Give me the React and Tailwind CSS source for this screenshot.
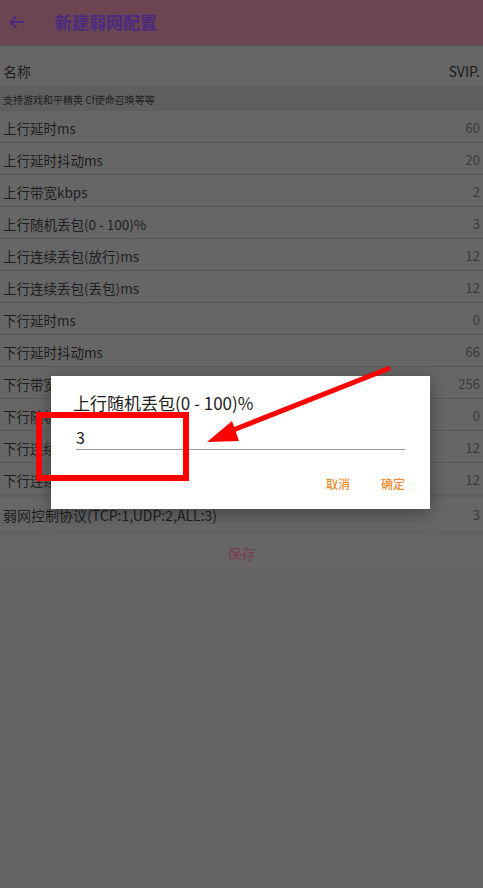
import React from "react";

const rows = [
  ["上行延时ms", "60"],
  ["上行延时抖动ms", "20"],
  ["上行带宽kbps", "2"],
  ["上行随机丢包(0 - 100)%", "3"],
  ["上行连续丢包(放行)ms", "12"],
  ["上行连续丢包(丢包)ms", "12"],
  ["下行延时ms", "0"],
  ["下行延时抖动ms", "66"],
  ["下行带宽kbps", "256"],
  ["下行随机丢包(0 - 100)%", "0"],
  ["下行连续丢包(放行)ms", "12"],
  ["下行连续丢包(丢包)ms", "12"],
];

const font = { fontFamily: '"Noto Sans CJK SC", Roboto, sans-serif' };

export default function App() {
  return (
    <div className="relative w-[483px] h-[888px] overflow-hidden bg-[#636363]" style={font}>
      <div className="flex h-[46px] items-center bg-[#6b4551] border-b-2 border-[#5e4a50]">
        <svg width="16" height="14" viewBox="0 0 16 14" className="ml-[9px]">
          <path d="M15 7H2M7 1.5L1.5 7L7 12.5" stroke="#4b2a80" strokeWidth="2" fill="none" />
        </svg>
        <span className="ml-[30px] text-[17px] font-bold leading-[22px] text-[#4b2a80]">新建弱网配置</span>
      </div>
      <div className="flex h-[40px] items-center justify-between bg-[#666666] px-[3px] pt-[10px]">
        <span className="text-[14px] leading-[20px] text-[#1e1e1e]">名称</span>
        <span className="text-[14px] leading-[20px] text-[#1a1a1a]">SVIP.</span>
      </div>
      <div className="flex h-[25px] items-center bg-[#5f5f5f] px-[3px] pt-[2px]">
        <span className="text-[10px] leading-[14px] text-[#202020]">支持游戏和平精英 Cf使命召唤等等</span>
      </div>
      <div className="flex flex-col">
        {rows.map(([k, v]) => (
          <div key={k} className="flex h-[32px] items-center justify-between border-b border-[#5a5a5a] bg-[#666666] px-[3px] pt-[2px]">
            <span className="text-[13.5px] leading-[20px] text-[#1e1e1e]">{k}</span>
            <span className="text-[13px] leading-[20px] text-[#3a3a3a]">{v}</span>
          </div>
        ))}
      </div>
      <div className="mt-[3px] flex h-[32px] items-center justify-between bg-[#666666] px-[3px] pt-[2px]">
        <span className="text-[14px] leading-[20px] text-[#1e1e1e]">弱网控制协议(TCP:1,UDP:2,ALL:3)</span>
        <span className="text-[13px] leading-[20px] text-[#3a3a3a]">3</span>
      </div>
      <div className="mt-[6px] flex h-[32px] items-center justify-center bg-[#666666] pt-[2px]">
        <span className="text-[14px] leading-[20px] text-[#7a3e50]">保存</span>
      </div>

      <div className="absolute left-[51px] top-[376px] h-[133px] w-[379px] bg-white shadow-[0_4px_16px_rgba(0,0,0,0.35)]">
        <div className="ml-[22px] mt-[15px] text-[17px] leading-[24px] text-[#222222]">上行随机丢包(0 - 100)%</div>
        <div className="ml-[25px] mr-[25px] mt-[11px] border-b border-[#9a9a9a] pb-[1px] text-[16px] leading-[22px] text-[#222222]">3</div>
        <div className="mt-[26px] flex justify-end gap-[31px] pr-[25px] text-[12px] font-medium leading-[16px] text-[#f28a2f]">
          <span>取消</span>
          <span>确定</span>
        </div>
      </div>

      <div className="absolute left-[36px] top-[412px] h-[69px] w-[153px] border-[6px] border-[#ff0000]" />
      <svg className="absolute left-0 top-0" width="483" height="888">
        <line x1="390" y1="368" x2="228" y2="432" stroke="#ff0000" strokeWidth="5" />
        <polygon points="207,442 232,421 239,441" fill="#ff0000" />
      </svg>
    </div>
  );
}
